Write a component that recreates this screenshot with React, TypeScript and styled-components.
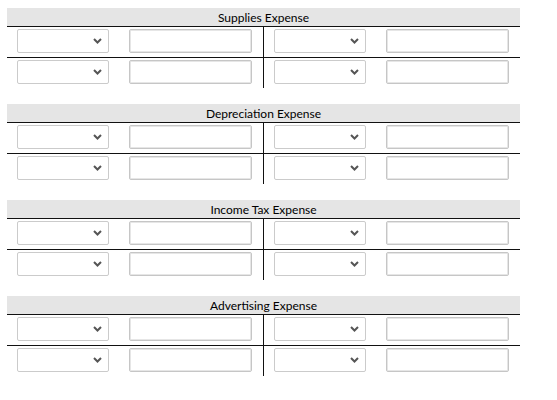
import styled, { createGlobalStyle } from "styled-components"

const GlobalStyle = createGlobalStyle`
  body {
    margin: 0;
    background: #fff;
    font-family: Lato, "Liberation Sans", sans-serif;
  }
`;

const Page = styled.div`
  padding: 8px 0 0 7px;
  width: 513px;
`;

const Section = styled.section`
  margin-bottom: 16px;
`;

const Header = styled.div`
  height: 18px;
  line-height: 19px;
  background: #e5e5e5;
  border-bottom: 1px solid #111;
  text-align: center;
  font-size: 12px;
  color: #000;
`;

const Row = styled.div<{ $line?: boolean }>`
  display: grid;
  grid-template-columns: 257px 256px;
  border-bottom: ${(p) => (p.$line ? "1px solid #111" : "none")};
`;

const Cell = styled.div<{ $divider?: boolean }>`
  display: flex;
  gap: 20px;
  padding: 2px 0 4px 10px;
  border-right: ${(p) => (p.$divider ? "1px solid #111" : "none")};
`;

const SelectWrap = styled.div`
  position: relative;
  width: 92px;
  height: 24px;
`;

const Select = styled.select`
  appearance: none;
  box-sizing: border-box;
  width: 100%;
  height: 100%;
  margin: 0;
  border: 1px solid #cbcbcb;
  border-radius: 2px;
  background: #fff;
  font-family: inherit;
`;

const Chevron = styled.svg`
  position: absolute;
  right: 7px;
  top: 9px;
  pointer-events: none;
`;

const Input = styled.input`
  box-sizing: border-box;
  width: 123px;
  height: 24px;
  margin: 0;
  border: 1px solid #c6c6c6;
  border-radius: 2px;
  box-shadow: inset 0 0 0 1px #e6e6e6;
  background: #fff;
`;

function Pair() {
  return (
    <>
      <SelectWrap>
        <Select defaultValue="">
          <option value=""></option>
        </Select>
        <Chevron width="9" height="6" viewBox="0 0 9 6">
          <polyline points="1,1 4.5,4.5 8,1" fill="none" stroke="#555" strokeWidth="2" />
        </Chevron>
      </SelectWrap>
      <Input type="text" />
    </>
  )
}

const accounts = ["Supplies Expense", "Depreciation Expense", "Income Tax Expense", "Advertising Expense"];

export default function App() {
  return (
    <>
      <GlobalStyle />
      <Page>
        {accounts.map((name) => (
          <Section key={name}>
            <Header>{name}</Header>
            {[0, 1].map((i) => (
              <Row key={i} $line={i === 0}>
                <Cell $divider>
                  <Pair />
                </Cell>
                <Cell>
                  <Pair />
                </Cell>
              </Row>
            ))}
          </Section>
        ))}
      </Page>
    </>
  )
}
